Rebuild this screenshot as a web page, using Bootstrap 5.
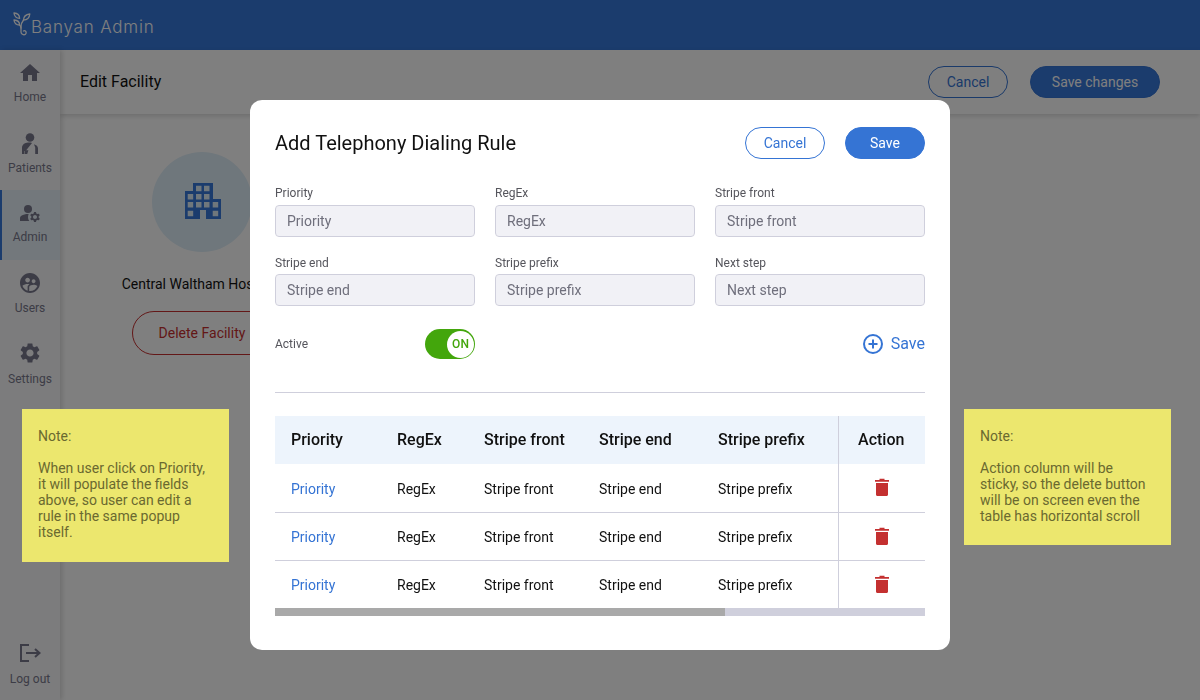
<!DOCTYPE html>
<html lang="en">
<head>
    <meta charset="UTF-8">
    <meta name="viewport" content="width=device-width, initial-scale=1.0">
    <title>Banyan Admin - Edit Facility</title>

    <!-- Bootstrap CSS -->
    <link href="https://cdn.jsdelivr.net/npm/bootstrap@5.3.0/dist/css/bootstrap.min.css" rel="stylesheet">

    <style>
        html, body {
            height: 100%;
        }
        body {
            font-family: Roboto, "Liberation Sans", sans-serif;
            background-color: #fff;
            overflow: hidden;
        }

        /* page behind the popup */
        .top-bar {
            height: 50px;
            background-color: #3678da;
            padding-left: 13px;
        }
        .brand-name {
            font-family: Inter, "Liberation Sans", sans-serif;
            font-weight: 300;
            font-size: 17px;
            letter-spacing: .8px;
            color: #fff;
            padding-top: 5px;
        }
        .page-body {
            height: 650px;
        }
        .side-menu {
            width: 60px;
            background-color: #f8f8fb;
            box-shadow: 2px 0 5px rgba(0, 0, 0, .15);
            z-index: 2;
        }
        .side-item {
            height: 70px;
            padding-top: 11px;
            color: #78788c;
            font-size: 12px;
            line-height: 14px;
            text-decoration: none;
        }
        .side-item svg {
            width: 24px;
            height: 24px;
            fill: currentColor;
            margin-bottom: 6px;
        }
        .side-item.label-up svg {
            margin-bottom: 5px;
        }
        .side-item.label-down svg {
            margin-bottom: 7px;
        }
        .side-item.is-active {
            background-color: #e6f0f8;
            border-left: 2px solid #3678da;
            padding-right: 2px;
        }
        .head-bar {
            height: 64px;
            padding: 0 40px 0 20px;
            box-shadow: 0 2px 5px rgba(0, 0, 0, .15);
        }
        .head-title {
            font-size: 16px;
            color: #111;
        }
        .head-actions {
            column-gap: 22px;
        }
        .pill-btn {
            height: 32px;
            padding: 0;
            font-size: 14px;
            line-height: 30px;
            border-radius: 16px;
            border: 1px solid #3574d4;
        }
        .pill-line {
            width: 80px;
            background-color: #fff;
            color: #3574d4;
        }
        .pill-fill {
            width: 80px;
            padding-bottom: 2px;
            background-color: #3574d4;
            color: #fff;
        }
        .pill-wide {
            width: 130px;
            background-color: #3678da;
        }
        .facility-side {
            width: 284px;
            padding-top: 38px;
        }
        .facility-logo {
            width: 100px;
            height: 100px;
            border-radius: 50%;
            background-color: #dfeef8;
        }
        .facility-logo svg {
            margin: -2px 0 0 2px;
        }
        .facility-name {
            font-size: 14px;
            color: #111;
            margin-top: 22px;
            padding-right: 2px;
            white-space: nowrap;
        }
        .delete-btn {
            width: 140px;
            height: 44px;
            margin-top: 16px;
            border: 1px solid #c62f2f;
            border-radius: 22px;
            background: none;
            color: #c62f2f;
            font-size: 14px;
        }

        /* popup */
        .rule-dialog {
            max-width: 700px;
            margin: 100px auto 0;
        }
        .rule-box {
            height: 550px;
            border: 0;
            border-radius: 12px;
            padding: 27px 25px 0;
        }
        .rule-title {
            font-size: 20px;
            font-weight: 400;
            line-height: 32px;
            color: #111;
        }
        .rule-fields {
            display: grid;
            grid-template-columns: 200px 200px 210px;
            column-gap: 20px;
            row-gap: 18px;
            margin-top: 27px;
        }
        .rule-label {
            display: block;
            font-size: 12px;
            line-height: 14px;
            margin-bottom: 5px;
            color: #55555c;
        }
        .rule-fields > div:nth-child(n+4) .rule-label {
            margin-top: 1px;
            margin-bottom: 4px;
        }
        .rule-input {
            height: 32px;
            padding: 0 11px;
            font-size: 14px;
            background-color: #f1f1f6;
            border: 1px solid #cfcfdc;
            border-radius: 4px;
        }
        .rule-input::placeholder {
            color: #6f6f7c;
            opacity: 1;
        }
        .active-row {
            height: 30px;
            margin-top: 23px;
        }
        .active-label {
            width: 150px;
            font-size: 12px;
            color: #55555c;
        }
        .on-switch {
            width: 50px;
            height: 30px;
            border-radius: 15px;
            background-color: #43a60c;
            padding-right: 1px;
        }
        .on-knob {
            width: 27px;
            height: 27px;
            border-radius: 50%;
            background-color: #fff;
            color: #43a60c;
            font-size: 12px;
            font-weight: 500;
        }
        .add-link {
            color: #3574d4;
            font-size: 16px;
            text-decoration: none;
        }
        .add-link svg {
            width: 20px;
            height: 20px;
            margin-right: 8px;
        }
        .rule-divider {
            height: 1px;
            margin: 33px 0 23px;
            background-color: #cfcfdc;
        }
        .rule-table {
            table-layout: fixed;
            width: 650px;
            margin: 0;
            color: #111;
            --bs-table-border-color: #cfcfdc;
        }
        .rule-table th,
        .rule-table td {
            height: 48px;
            padding: 0 0 0 16px;
            vertical-align: middle;
            font-size: 14px;
        }
        .rule-table td {
            padding-top: 2px;
        }
        .rule-table tbody tr:first-child td {
            padding-top: 4px;
        }
        .rule-table th {
            font-size: 16px;
            font-weight: 500;
            background-color: #edf4fc;
            border-bottom: 0;
        }
        .rule-table tbody tr:last-child td {
            border-bottom: 0;
        }
        .rule-table .action-col,
        .rule-table tbody tr:first-child .action-col {
            padding: 0;
            text-align: center;
            border-left: 1px solid #cfcfdc;
        }
        .rule-table th.action-col {
            padding-right: 1px;
        }
        .col-priority { width: 106px; }
        .col-regex { width: 87px; }
        .col-front { width: 115px; }
        .col-end { width: 119px; }
        .col-prefix { width: 136px; }
        .col-action { width: 87px; }
        .priority-link {
            color: #3574d4;
            text-decoration: none;
        }
        .trash-icon {
            width: 14px;
            height: 18px;
            fill: #c43030;
            margin-top: -2px;
        }
        .rule-table tbody tr:first-child .trash-icon {
            margin-top: -4px;
        }
        .scroll-track {
            height: 8px;
            background-color: #cfcfdc;
        }
        .scroll-thumb {
            width: 450px;
            height: 100%;
            background-color: #a9a9a9;
        }

        /* yellow notes lie over the popup layer */
        .sticky-note {
            position: fixed;
            top: 409px;
            width: 207px;
            padding: 19px 20px 21px 16px;
            background-color: #ece76e;
            color: #6a6930;
            font-size: 14px;
            line-height: 16px;
            z-index: 1060;
        }
        .note-left {
            left: 22px;
            padding-bottom: 22px;
        }
        .note-right { left: 964px; }
        .note-head { margin-bottom: 16px; }
    </style>
</head>
<body>
    <!-- Page under the popup -->
    <div class="top-bar d-flex align-items-center">
        <svg width="18" height="26" viewBox="0 0 18 26" fill="none" stroke="#fff" stroke-width="1.300" stroke-linecap="round" stroke-linejoin="round">
            <path d="M1 1c3.600.2 5.600 2.200 5.600 5.400C3.400 6.200 1.300 4.200 1 1z"/>
            <path d="M1 8c3.600.2 5.600 2 5.600 5C3.400 13 1.300 11 1 8z"/>
            <path d="M16.800 2c-3.800.4-6.200 2.600-6.400 6.200 3.800-.3 6.100-2.600 6.400-6.200z"/>
            <path d="M10.400 8.200C8.800 10 8 12 8 15v5c0 2.800 4 3.800 5 1.400.8-1.800-1-3.400-2.600-2.400"/>
            <path d="M6.600 13c.9.800 1.400 1.600 1.400 3"/>
        </svg>
        <span class="brand-name">Banyan Admin</span>
    </div>

    <div class="page-body d-flex">
        <nav class="side-menu d-flex flex-column flex-shrink-0">
            <a class="side-item label-up d-flex flex-column align-items-center" href="#">
                <svg viewBox="0 0 24 24"><path d="M10 20v-6h4v6h5v-8h3L12 3 2 12h3v8z"/></svg>
                Home
            </a>
            <a class="side-item d-flex flex-column align-items-center" href="#">
                <svg viewBox="0 0 24 24"><circle cx="12" cy="6.500" r="4.300"/><path d="M4 23v-6c0-3.300 2.600-5.200 6-5.500 1.500-.1 3 0 4 .5l-5.800 7.200h2.200l-1.200 3.800H6.500v-3H6V23zM16 13.200c2.400.8 4 2 4 4.300V23h-2.800v-6.500z"/></svg>
                Patients
            </a>
            <a class="side-item label-up is-active d-flex flex-column align-items-center" href="#">
                <svg viewBox="0 0 24 24"><circle cx="10" cy="8" r="4"/><path d="M10.670 13.020C10.450 13.010 10.230 13 10 13c-2.420 0-4.680.67-6.610 1.820C2.510 15.340 2 16.320 2 17.350V20h9.260C10.470 18.870 10 17.490 10 16c0-1.070.25-2.070.67-2.980z"/><path d="M20.750 16c0-.22-.03-.42-.06-.63l1.140-1.010-1-1.730-1.450.49c-.32-.27-.68-.48-1.080-.63L18 11h-2l-.3 1.490c-.4.15-.76.36-1.080.63l-1.450-.49-1 1.730 1.140 1.010c-.03.21-.06.41-.06.63s.03.42.06.63l-1.140 1.010 1 1.730 1.450-.49c.32.27.68.48 1.080.63L16 21h2l.3-1.490c.4-.15.76-.36 1.080-.63l1.450.49 1-1.730-1.140-1.010c.03-.21.06-.41.06-.63zM17 18c-1.100 0-2-.9-2-2s.9-2 2-2 2 .9 2 2-.9 2-2 2z"/></svg>
                Admin
            </a>
            <a class="side-item d-flex flex-column align-items-center" href="#">
                <svg viewBox="0 0 24 24"><path d="M11.990 2c-5.520 0-10 4.480-10 10s4.480 10 10 10 10-4.480 10-10-4.480-10-10-10zm3.610 6.340c1.070 0 1.930.86 1.930 1.930 0 1.070-.86 1.930-1.930 1.930-1.070 0-1.930-.86-1.930-1.930-.01-1.070.86-1.930 1.930-1.930zm-6-1.580c1.300 0 2.360 1.060 2.360 2.360 0 1.300-1.060 2.360-2.360 2.360s-2.360-1.060-2.360-2.360c0-1.310 1.050-2.360 2.360-2.360zm0 9.130v3.750c-2.400-.75-4.300-2.600-5.140-4.960 1.050-1.120 3.670-1.690 5.140-1.690.53 0 1.200.08 1.900.22-1.640.87-1.900 2.020-1.900 2.680zM11.990 20c-.27 0-.53-.01-.79-.04v-4.070c0-1.420 2.940-2.130 4.400-2.130 1.070 0 2.920.39 3.840 1.150-1.170 2.970-4.060 5.090-7.450 5.090z"/></svg>
                Users
            </a>
            <a class="side-item label-down d-flex flex-column align-items-center" href="#">
                <svg viewBox="0 0 24 24"><path d="M19.140 12.940c.04-.3.060-.61.060-.94 0-.32-.02-.64-.07-.94l2.030-1.580c.18-.14.23-.41.12-.61l-1.920-3.320c-.12-.22-.37-.29-.59-.22l-2.390.96c-.5-.38-1.030-.7-1.620-.94l-.36-2.540c-.04-.24-.24-.41-.48-.41h-3.840c-.24 0-.43.17-.47.41l-.36 2.540c-.59.24-1.130.57-1.620.94l-2.390-.96c-.22-.08-.47 0-.59.22L2.740 8.870c-.12.21-.08.47.12.61l2.030 1.580c-.05.3-.09.63-.09.94s.02.64.07.94l-2.030 1.580c-.18.14-.23.41-.12.61l1.920 3.320c.12.22.37.29.59.22l2.390-.96c.5.38 1.030.7 1.620.94l.36 2.540c.05.24.24.41.48.41h3.840c.24 0 .44-.17.47-.41l.36-2.540c.59-.24 1.130-.56 1.620-.94l2.390.96c.22.08.47 0 .59-.22l1.920-3.320c.12-.22.07-.47-.12-.61l-2.010-1.580zM12 15.600c-1.980 0-3.600-1.620-3.600-3.600s1.620-3.600 3.600-3.600 3.600 1.620 3.600 3.600-1.620 3.600-3.600 3.600z"/></svg>
                Settings
            </a>
            <a class="side-item label-down d-flex flex-column align-items-center mt-auto" href="#">
                <svg viewBox="0 0 24 24" fill="none"><path d="M11 4H3v16h8M8 12h13M17 8l4.500 4-4.500 4" fill="none" stroke="currentColor" stroke-width="2"/></svg>
                Log out
            </a>
        </nav>

        <main class="flex-grow-1">
            <div class="head-bar d-flex align-items-center justify-content-between">
                <span class="head-title">Edit Facility</span>
                <div class="head-actions d-flex">
                    <button class="btn pill-btn pill-line" type="button">Cancel</button>
                    <button class="btn pill-btn pill-fill pill-wide" type="button">Save changes</button>
                </div>
            </div>
            <div class="facility-side d-flex flex-column align-items-center">
                <div class="facility-logo d-flex align-items-center justify-content-center">
                    <svg width="36" height="36" viewBox="0 0 36 36">
                        <path fill="#3678da" fill-rule="evenodd" d="M8 0H28V16H36V36H21V27H15V36H0V8H8ZM11 2.700v5.500h5.500V2.700ZM19 2.700v5.500h5.500V2.700ZM2.700 11v5.500h5.500V11ZM11 11v5.500h5.500V11ZM19 11v5.500h5.500V11ZM2.700 19v5.500h5.500V19ZM11 19v5.500h5.500V19ZM19 19v5.500h5.500V19ZM27.700 19v5.500h5.500V19ZM2.700 27.700v5.500h5.500v-5.500ZM27.700 27.700v5.500h5.500v-5.500Z"/>
                    </svg>
                </div>
                <div class="facility-name">Central Waltham Hospital</div>
                <button class="delete-btn" type="button">Delete Facility</button>
            </div>
        </main>
    </div>

    <div class="modal-backdrop show"></div>

    <!-- Popup -->
    <div class="modal d-block">
        <div class="modal-dialog rule-dialog">
            <div class="modal-content rule-box">
                <div class="d-flex align-items-center justify-content-between">
                    <h5 class="rule-title m-0">Add Telephony Dialing Rule</h5>
                    <div class="d-flex gap-3">
                        <button class="btn pill-btn pill-line me-1" type="button">Cancel</button>
                        <button class="btn pill-btn pill-fill" type="button">Save</button>
                    </div>
                </div>

                <div class="rule-fields">
                    <div>
                        <label class="rule-label">Priority</label>
                        <input class="form-control rule-input" type="text" placeholder="Priority">
                    </div>
                    <div>
                        <label class="rule-label">RegEx</label>
                        <input class="form-control rule-input" type="text" placeholder="RegEx">
                    </div>
                    <div>
                        <label class="rule-label">Stripe front</label>
                        <input class="form-control rule-input" type="text" placeholder="Stripe front">
                    </div>
                    <div>
                        <label class="rule-label">Stripe end</label>
                        <input class="form-control rule-input" type="text" placeholder="Stripe end">
                    </div>
                    <div>
                        <label class="rule-label">Stripe prefix</label>
                        <input class="form-control rule-input" type="text" placeholder="Stripe prefix">
                    </div>
                    <div>
                        <label class="rule-label">Next step</label>
                        <input class="form-control rule-input" type="text" placeholder="Next step">
                    </div>
                </div>

                <div class="active-row d-flex align-items-center">
                    <span class="active-label">Active</span>
                    <div class="on-switch d-flex align-items-center justify-content-end">
                        <span class="on-knob d-flex align-items-center justify-content-center">ON</span>
                    </div>
                    <a class="add-link d-flex align-items-center ms-auto" href="#">
                        <svg viewBox="0 0 20 20" fill="none" stroke="currentColor" stroke-width="2"><circle cx="10" cy="10" r="9"/><path d="M10 5.500v9M5.500 10h9"/></svg>
                        Save
                    </a>
                </div>

                <div class="rule-divider"></div>

                <table class="table rule-table">
                    <thead>
                        <tr>
                            <th class="col-priority">Priority</th>
                            <th class="col-regex">RegEx</th>
                            <th class="col-front">Stripe front</th>
                            <th class="col-end">Stripe end</th>
                            <th class="col-prefix">Stripe prefix</th>
                            <th class="col-action action-col">Action</th>
                        </tr>
                    </thead>
                    <tbody id="rule-rows"></tbody>
                </table>
                <div class="scroll-track">
                    <div class="scroll-thumb"></div>
                </div>
            </div>
        </div>
    </div>

    <div class="sticky-note note-left">
        <div class="note-head">Note:</div>
        When user click on Priority, it will populate the fields above, so user can edit a rule in the same popup itself.
    </div>
    <div class="sticky-note note-right">
        <div class="note-head">Note:</div>
        Action column will be sticky, so the delete button will be on screen even the table has horizontal scroll
    </div>

    <!-- Bootstrap JS -->
    <script src="https://cdn.jsdelivr.net/npm/bootstrap@5.3.0/dist/js/bootstrap.bundle.min.js"></script>

    <script>
        const trash = `<svg class="trash-icon" viewBox="0 0 14 18"><path d="M0 2h4.500V.8h5V2H14v1.800H0zM1 5h12v11.500c0 .8-.6 1.500-1.500 1.500h-9C1.600 18 1 17.300 1 16.500z"/></svg>`;
        const tableBody = document.getElementById("rule-rows");

        for (let i = 0; i < 3; i++) {
            tableBody.innerHTML += `<tr>
                <td><a class="priority-link" href="#">Priority</a></td>
                <td>RegEx</td>
                <td>Stripe front</td>
                <td>Stripe end</td>
                <td>Stripe prefix</td>
                <td class="action-col">${trash}</td>
            </tr>`;
        }
    </script>
</body>
</html>
